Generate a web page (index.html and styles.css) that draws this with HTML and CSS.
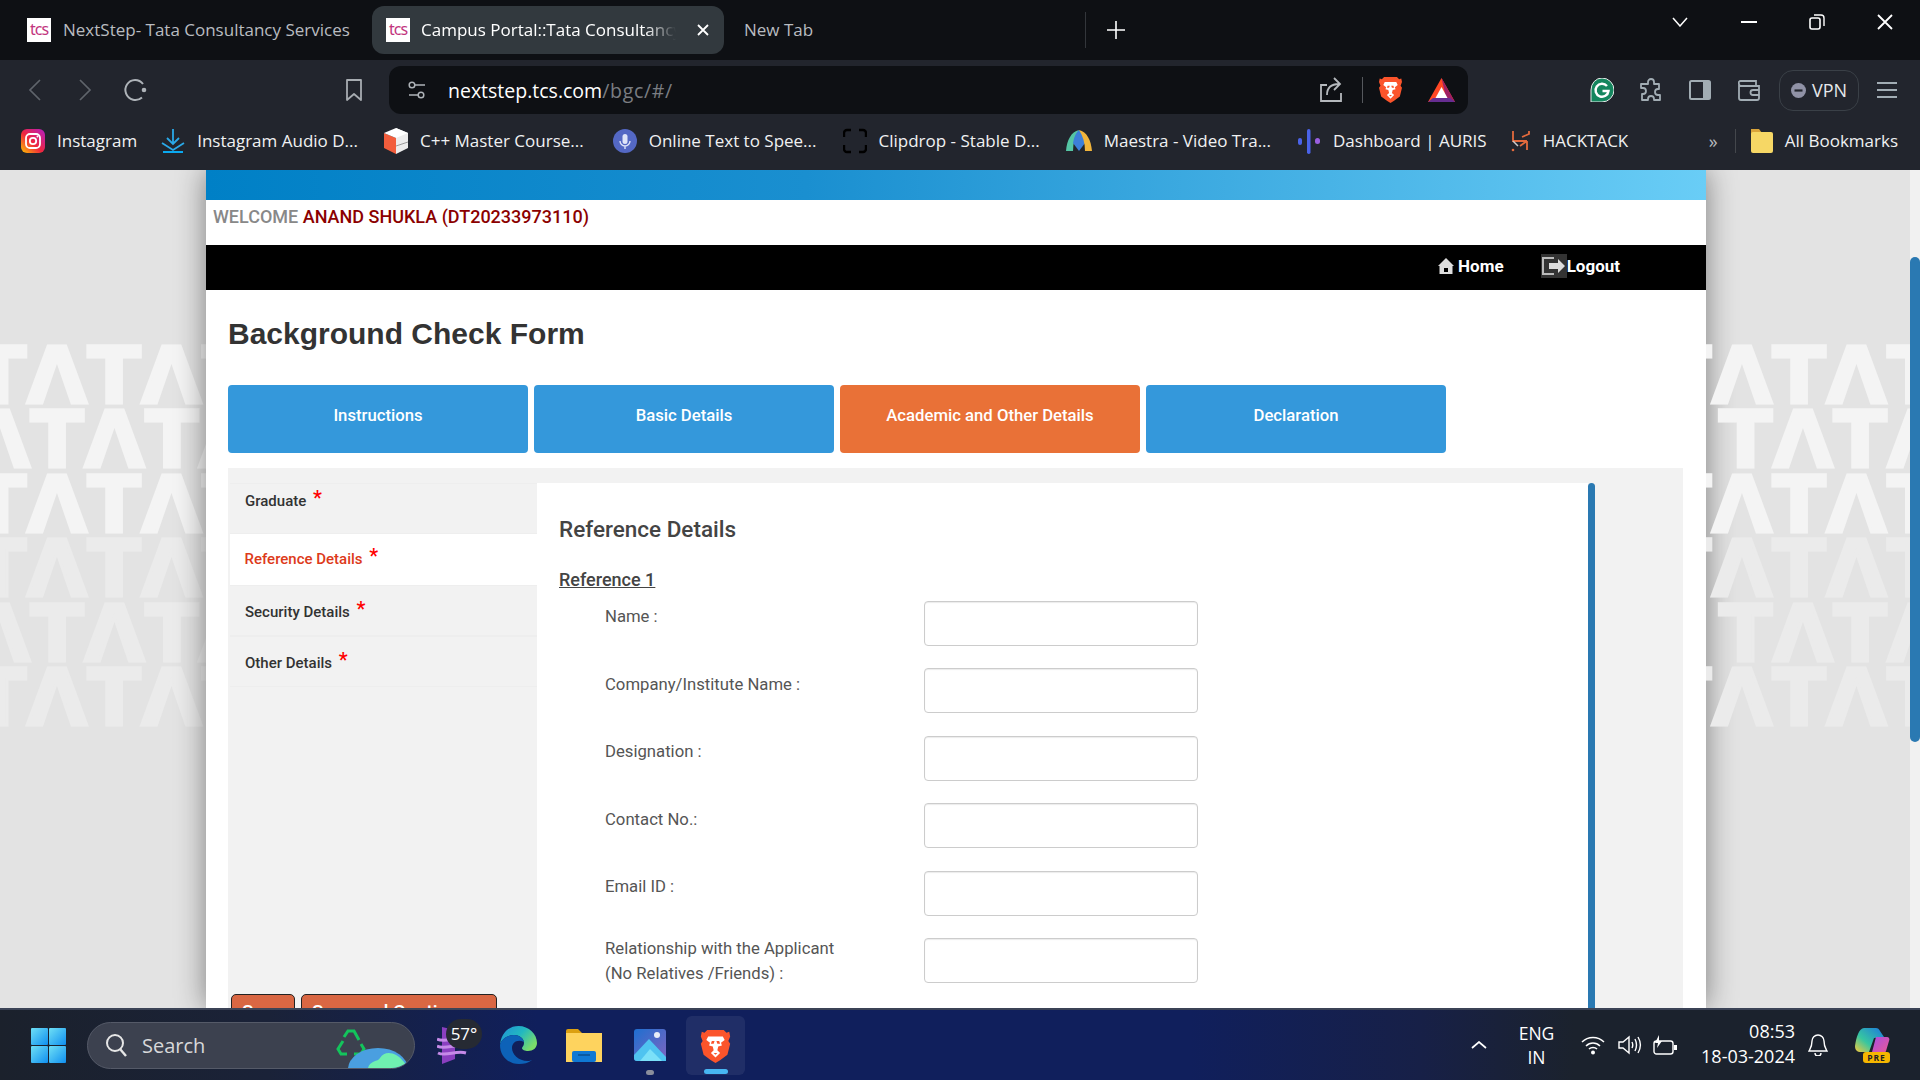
FILE: index.html
```html
<!DOCTYPE html>
<html lang="en">
<head>
  <meta charset="UTF-8">
  <title>Campus Portal::Tata Consultancy Services</title>
  <link rel="stylesheet" href="styles.css">
</head>
<body>
  <svg class="defs" width="0" height="0" aria-hidden="true">
    <symbol id="brave" viewBox="0 0 32 36">
      <path fill="#fb542b" d="M7 0h18l3 3 3-1 1 5-2 5 2 3-3 12-8 6-5 3-5-3-8-6L0 15l2-3-2-5 1-5 3 1z"/>
      <path fill="#fff" d="M8 7h16l2 4-4 3 1 3-4 1-1 4 3 3-5 5-5-5 3-3-1-4-4-1 1-3-4-3z"/>
      <path fill="#fb542b" d="M12 12h3l-1 3h-3zM17 12h3l1 3h-3zM14 25h4l-2 2z"/>
    </symbol>
  </svg>

  <!-- tabs -->
  <div class="tabstrip">
    <div class="tab">
      <span class="favicon">tcs</span>
      <span class="tab-title">NextStep- Tata Consultancy Services</span>
    </div>
    <div class="tab tab-active">
      <span class="favicon">tcs</span>
      <span class="tab-title tab-fade">Campus Portal::Tata Consultancy Services</span>
      <svg class="tab-close" width="12" height="12" viewBox="0 0 12 12"><path d="M1 1l10 10M11 1L1 11" stroke="#fff" stroke-width="1.8"/></svg>
    </div>
    <div class="tab tab-new">
      <span class="tab-title">New Tab</span>
    </div>
    <span class="tab-divider"></span>
    <svg class="tab-plus" width="18" height="18" viewBox="0 0 18 18"><path d="M9 0v18M0 9h18" stroke="#fff" stroke-width="1.6"/></svg>
    <div class="win-controls">
      <svg width="18" height="10" viewBox="0 0 18 10"><path d="M2 1l7 8 7-8" fill="none" stroke="#fff" stroke-width="1.5"/></svg>
      <svg width="16" height="10" viewBox="0 0 16 10"><path d="M0 5h16" stroke="#fff" stroke-width="2"/></svg>
      <svg width="16" height="16" viewBox="0 0 16 16"><rect x="1" y="4" width="10" height="11" rx="2" fill="none" stroke="#fff" stroke-width="1.6"/><path d="M5 1h7a3 3 0 0 1 3 3v8" fill="none" stroke="#fff" stroke-width="1.4"/></svg>
      <svg width="16" height="16" viewBox="0 0 16 16"><path d="M1 1l14 14M15 1L1 15" stroke="#fff" stroke-width="1.8"/></svg>
    </div>
  </div>

  <!-- toolbar -->
  <div class="toolbar">
    <div class="tb-btn"><svg width="14" height="24" viewBox="0 0 14 24"><path d="M12 2L2 12l10 10" fill="none" stroke="#5f646b" stroke-width="1.7"/></svg></div>
    <div class="tb-btn"><svg width="14" height="24" viewBox="0 0 14 24"><path d="M2 2l10 10L2 22" fill="none" stroke="#5f646b" stroke-width="1.7"/></svg></div>
    <div class="tb-btn"><svg width="26" height="26" viewBox="0 0 26 26"><path d="M20 20.5A10 10 0 1 1 13 3" fill="none" stroke="#aeb3b8" stroke-width="2"/><path d="M13 3a10 10 0 0 1 8 4" fill="none" stroke="#aeb3b8" stroke-width="2"/><circle cx="22" cy="13" r="2.3" fill="#aeb3b8"/></svg></div>
    <div class="tb-btn tb-bookmark"><svg width="18" height="24" viewBox="0 0 18 24"><path d="M2 2h14v20l-7-6-7 6z" fill="none" stroke="#a7acb1" stroke-width="1.8" stroke-linejoin="round"/></svg></div>
    <div class="addressbar">
      <svg class="tune" width="20" height="20" viewBox="0 0 20 20"><circle cx="5" cy="5" r="2.8" fill="none" stroke="#aeb3b8" stroke-width="1.5"/><path d="M8 5h10M2 15h9" stroke="#aeb3b8" stroke-width="1.5"/><circle cx="14" cy="15" r="2.8" fill="none" stroke="#aeb3b8" stroke-width="1.5"/></svg>
      <span class="url"><b>nextstep.tcs.com</b>/bgc/#/</span>
      <svg class="share" width="24" height="26" viewBox="0 0 24 26"><path d="M8 8H2v16h20v-8" fill="none" stroke="#b5b9bd" stroke-width="1.8"/><path d="M8 18c0-7 4-11 12-11M15 1l6 6-6 6" fill="none" stroke="#b5b9bd" stroke-width="1.8"/></svg>
      <span class="addr-sep"></span>
      <svg class="addr-brave" width="23" height="26"><use href="#brave"/></svg>
      <svg class="addr-bat" width="27" height="24" viewBox="0 0 27 24"><path fill="#ff4724" d="M13.5 0L27 24H0z"/><path fill="#9e1f63" d="M13.5 0L27 24h-8z"/><path fill="#662d91" d="M0 24l5-4h17l5 4z"/><path fill="#fff" d="M13.5 9l6 11h-12z"/></svg>
    </div>
    <div class="tb-btn tb-ext tb-first-ext">
      <svg width="24" height="24" viewBox="0 0 24 24"><path fill="#15865e" d="M12 0a12 12 0 0 1 0 24H1V12A11 12 0 0 1 12 0z" stroke="#e8e8e8"/><path d="M17 8a6.5 6.5 0 1 0 1.5 5h-6" fill="none" stroke="#fff" stroke-width="2.4"/></svg>
    </div>
    <div class="tb-btn tb-ext"><svg width="24" height="24" viewBox="0 0 24 24"><path d="M9 4a3 3 0 0 1 6 0v2h5v5h-1a3 3 0 0 0 0 6h2v5h-6v-1a3 3 0 0 0-6 0v1H3v-6h1a3 3 0 0 0 0-6H2V6h7z" fill="none" stroke="#a2adb4" stroke-width="1.8" stroke-linejoin="round"/></svg></div>
    <div class="tb-btn tb-ext"><svg width="22" height="20" viewBox="0 0 22 20"><rect x="1" y="1" width="20" height="18" rx="1.5" fill="none" stroke="#a2adb4" stroke-width="2"/><path fill="#a2adb4" d="M14 1h7v18h-7z"/></svg></div>
    <div class="tb-btn tb-ext"><svg width="22" height="22" viewBox="0 0 22 22"><path d="M1 5v14a2 2 0 0 0 2 2h16a2 2 0 0 0 2-2V7H3a2 2 0 0 1-2-2 2 2 0 0 1 2-3h15v5" fill="none" stroke="#a2adb4" stroke-width="1.8"/><path d="M21 11h-6a2.5 2.5 0 0 0 0 5h6" fill="none" stroke="#a2adb4" stroke-width="1.8"/></svg></div>
    <div class="vpn">
      <svg width="15" height="15" viewBox="0 0 15 15"><circle cx="7.5" cy="7.5" r="7.5" fill="#9092a6"/><path d="M3.5 7.5h8" stroke="#22252d" stroke-width="2.2"/></svg>
      VPN
    </div>
    <div class="tb-btn tb-ext tb-burger"><svg width="20" height="16" viewBox="0 0 20 16"><path d="M0 1h20M0 8h20M0 15h20" stroke="#a2adb4" stroke-width="1.8"/></svg></div>
  </div>

  <!-- bookmarks -->
  <div class="bookmarks">
    <div class="bm bm-tight"><svg width="24" height="24" viewBox="0 0 24 24"><defs><linearGradient id="ig" x1="0" y1="1" x2="1" y2="0"><stop offset="0" stop-color="#fdc500"/><stop offset=".45" stop-color="#f0263c"/><stop offset="1" stop-color="#b61fc4"/></linearGradient></defs><rect width="24" height="24" rx="6" fill="url(#ig)"/><rect x="5" y="5" width="14" height="14" rx="4" fill="none" stroke="#fff" stroke-width="1.8"/><circle cx="12" cy="12" r="3.2" fill="none" stroke="#fff" stroke-width="1.8"/><circle cx="16.5" cy="7.5" r="1" fill="#fff"/></svg>Instagram</div>
    <div class="bm"><svg width="24" height="24" viewBox="0 0 24 24"><path d="M12 0v14M6 9l6 6 6-6M1 14l11 7 11-7" fill="none" stroke="#2aa9e8" stroke-width="1.8"/><path d="M2 23h20" stroke="#0aa9f0" stroke-width="2"/></svg>Instagram Audio D...</div>
    <div class="bm bm-loose"><svg width="24" height="26" viewBox="0 0 24 26"><path fill="#ececec" d="M12 0l12 5v15l-12 6z"/><path fill="#f25d3c" d="M0 5l12 5v16L0 20z"/><path fill="#fff" d="M0 5l12-5 12 5-12 5z"/><path d="M12 18l12-4" stroke="#999"/></svg>C++ Master Course...</div>
    <div class="bm"><svg width="24" height="24" viewBox="0 0 24 24"><circle cx="12" cy="12" r="12" fill="#5468c4"/><rect x="9.5" y="5" width="5" height="10" rx="2.5" fill="#dfe4f8"/><path d="M7 12a5 5 0 0 0 10 0M12 17v3" fill="none" stroke="#dfe4f8" stroke-width="1.4"/></svg>Online Text to Spee...</div>
    <div class="bm"><svg width="24" height="26" viewBox="0 0 24 26"><path d="M8 2H4a3 3 0 0 0-3 3v4M16 2h4a3 3 0 0 1 3 3v4M8 24H4a3 3 0 0 1-3-3v-4M16 24h4a3 3 0 0 0 3-3v-4" fill="none" stroke="#000" stroke-width="2.4"/></svg>Clipdrop - Stable D...</div>
    <div class="bm"><svg width="26" height="22" viewBox="0 0 26 22"><path fill="#55c6a4" d="M0 21C1 10 5 2 13 0 9 6 7 13 7 21z"/><path fill="#3d7fd9" d="M13 0c4 4 5 8 6 13l-6 8-6-8c1-5 2-9 6-13z"/><path fill="#f2b53b" d="M13 0c8 2 12 10 13 21h-7c0-8-2-15-6-21z"/></svg>Maestra - Video Tra...</div>
    <div class="bm bm-tight"><svg width="24" height="26" viewBox="0 0 24 26"><rect x="1" y="10" width="4" height="7" rx="2" fill="#4a63e8"/><rect x="10" y="1" width="3.5" height="25" rx="1.7" fill="#4a63e8"/><rect x="18" y="10" width="5" height="6" rx="2.5" fill="#9a5fe0"/></svg>Dashboard | AURIS</div>
    <div class="bm"><svg width="20" height="22" viewBox="0 0 20 22"><path d="M2 1v10h14M16 11l-7 5M18 1v3l-7 3M16 11v9" fill="none" stroke="#e36a3d" stroke-width="1.8"/><path d="M2 11l5 5" stroke="#ccc" stroke-width="1.5"/><circle cx="2" cy="20" r="1.3" fill="#e36a3d"/></svg>HACKTACK</div>
    <span class="bm-more">»</span>
    <span class="bm-sep"></span>
    <div class="bm bm-folder"><svg width="23" height="26" viewBox="0 0 23 26"><path fill="#d9a43a" d="M1 1h8l3 4v3H1z"/><rect x="1" y="4" width="22" height="21" rx="2" fill="#f6d765"/></svg>All Bookmarks</div>
  </div>

  <!-- page in the browser -->
  <main class="viewport">
    <aside class="watermark watermark-left" aria-hidden="true">
      <div class="wm-row wm-a">TΛTΛTΛTΛ</div>
      <div class="wm-row wm-b">TΛTΛTΛTΛ</div>
      <div class="wm-row wm-a">TΛTΛTΛTΛ</div>
      <div class="wm-row wm-a wm-faint">TΛTΛTΛTΛ</div>
      <div class="wm-row wm-b wm-faint">TΛTΛTΛTΛ</div>
      <div class="wm-row wm-a wm-faint">TΛTΛTΛTΛ</div>
    </aside>

    <div class="sheet">
      <div class="topband"></div>
      <div class="welcome"><span class="welcome-label">WELCOME</span> <span class="welcome-name">ANAND SHUKLA (DT20233973110)</span></div>
      <nav class="blacknav">
        <a class="nav-link">
          <svg width="16" height="16" viewBox="0 0 16 16"><path fill="#ddd" d="M8 0l8 8h-1.5v8h-13V8H0z"/><rect x="6" y="10" width="4" height="4" fill="#000"/></svg>
          Home
        </a>
        <a class="nav-link nav-logout">
          <span class="logout-icon"><svg width="24" height="18" viewBox="0 0 24 18"><path d="M12 1H1v16h11" fill="none" stroke="#bbb" stroke-width="2"/><path fill="#ddd" d="M7 6h9V2l7 7-7 7v-4H7z"/></svg></span>Logout
        </a>
      </nav>

      <div class="sheet-body">
        <h1>Background Check Form</h1>
        <div class="steps">
          <div class="step">Instructions</div>
          <div class="step">Basic Details</div>
          <div class="step step-active">Academic and Other Details</div>
          <div class="step">Declaration</div>
        </div>

        <div class="panel">
          <div class="sidemenu">
            <div class="side-item">Graduate <span class="req">*</span></div>
            <div class="side-item side-active">Reference Details <span class="req">*</span></div>
            <div class="side-item">Security Details <span class="req">*</span></div>
            <div class="side-item">Other Details <span class="req">*</span></div>
            <div class="side-actions">
              <button class="btn-save">Save</button>
              <button class="btn-save btn-continue">Save and Continue</button>
            </div>
          </div>
          <div class="content">
            <h3>Reference Details</h3>
            <h4>Reference 1</h4>
            <div class="field"><label>Name :</label><input type="text"></div>
            <div class="field"><label>Company/Institute Name :</label><input type="text"></div>
            <div class="field"><label>Designation :</label><input type="text"></div>
            <div class="field"><label>Contact No.:</label><input type="text"></div>
            <div class="field"><label>Email ID :</label><input type="text"></div>
            <div class="field field-tall"><label>Relationship with the Applicant<br>(No Relatives /Friends) :</label><input type="text"></div>
          </div>
          <div class="inner-scroll"></div>
        </div>
      </div>
    </div>

    <aside class="watermark watermark-right" aria-hidden="true">
      <div class="wm-row wm-c">TΛTΛTΛTΛ</div>
      <div class="wm-row wm-d">TΛTΛTΛTΛ</div>
      <div class="wm-row wm-c">TΛTΛTΛTΛ</div>
      <div class="wm-row wm-c wm-faint">TΛTΛTΛTΛ</div>
      <div class="wm-row wm-d wm-faint">TΛTΛTΛTΛ</div>
      <div class="wm-row wm-c wm-faint">TΛTΛTΛTΛ</div>
    </aside>
    <div class="page-scroll"><div class="page-thumb"></div></div>
  </main>

  <!-- windows taskbar -->
  <footer class="taskbar">
    <svg class="win-logo" width="35" height="35" viewBox="0 0 35 35">
      <defs><linearGradient id="win" x1="0" y1="0" x2="1" y2="1"><stop offset="0" stop-color="#6fe0f5"/><stop offset="1" stop-color="#0f8ff0"/></linearGradient></defs>
      <rect width="17" height="17" rx="1" fill="url(#win)"/><rect x="18" width="17" height="17" rx="1" fill="url(#win)"/><rect y="18" width="17" height="17" rx="1" fill="url(#win)"/><rect x="18" y="18" width="17" height="17" rx="1" fill="url(#win)"/>
    </svg>
    <div class="searchbox">
      <svg width="22" height="24" viewBox="0 0 22 24"><circle cx="10" cy="10" r="8" fill="none" stroke="#e6e6e6" stroke-width="2"/><path d="M15 16l6 7" stroke="#e6e6e6" stroke-width="2.4"/></svg>
      <span>Search</span>
      <svg class="search-art" width="76" height="46" viewBox="0 0 76 46">
        <path d="M10 15l4-6h6l5 9M27 22l3 5-3 5h-7M13 32H7l-3-5 5-8" fill="none" stroke="#13c45c" stroke-width="3"/>
        <ellipse cx="44" cy="47" rx="30" ry="21" fill="#4a9fe0"/>
        <path d="M34 46c2-8 10-6 12-10 5-8 16-6 24 4l4 6z" fill="#6ff0b0"/>
      </svg>
    </div>
    <div class="task-icon task-widget">
      <svg width="30" height="37" viewBox="0 0 30 37"><path fill="#8a3fc0" d="M5 0l13 3v29L5 37z"/><path d="M0 12c8 4 20-3 30 1M0 19c8 4 20-3 30 1M1 26c8 4 18-3 28 0" fill="none" stroke="#c58ae8" stroke-width="3"/></svg>
      <span class="temp-badge">57°</span>
    </div>
    <div class="task-icon task-edge">
      <svg width="37" height="38" viewBox="0 0 37 38"><defs><linearGradient id="edge" x1="0" y1="0" x2="1" y2=".6"><stop offset="0" stop-color="#1f8fd8"/><stop offset=".55" stop-color="#22b8c0"/><stop offset="1" stop-color="#7adc6a"/></linearGradient></defs><path fill="url(#edge)" d="M18.5 0C29 0 37 8 37 17c0 5-4 8-9 8-3 0-6-1-6-3 0-1 2-2 2-5 0-5-5-8-10-8C7 9 1 14 0 19 1 8 8 0 18.5 0z"/><path fill="#0d62b8" d="M0 19c1-5 7-10 14-10 5 0 9 3 10 7-6-3-12 0-12 6 0 6 6 13 16 13 1 0 3-.5 4-1-4 3-8 4-13 4C8 38 0 30 0 19z"/></svg>
    </div>
    <div class="task-icon task-folder">
      <svg width="36" height="33" viewBox="0 0 36 33"><path fill="#dca011" d="M0 2a2 2 0 0 1 2-2h10l4 4v6H0z"/><path fill="#fed35e" d="M0 4h36v29H0z"/><rect x="6" y="22" width="24" height="11" rx="2" fill="#0f78d4"/><path d="M12 26h12" stroke="#0a4f90" stroke-width="1.5"/></svg>
    </div>
    <div class="task-icon task-photos">
      <svg width="32" height="32" viewBox="0 0 32 32"><defs><linearGradient id="ph" x1="0" y1="0" x2="1" y2="1"><stop offset="0" stop-color="#1e6fd0"/><stop offset="1" stop-color="#8064c0"/></linearGradient></defs><rect width="32" height="32" rx="3" fill="url(#ph)"/><circle cx="23" cy="6" r="3" fill="#e8eef8"/><path fill="#4fc3f0" d="M0 26l15-16 17 18v4H3a3 3 0 0 1-3-3z"/><path fill="#7be0f8" d="M6 32l10-12 12 12z"/></svg>
      <span class="run-dot"></span>
    </div>
    <div class="task-icon task-brave">
      <svg width="31" height="33"><use href="#brave"/></svg>
      <span class="run-bar"></span>
    </div>

    <div class="tray">
      <svg class="tray-chev" width="16" height="8" viewBox="0 0 16 8"><path d="M1 7l7-6 7 6" fill="none" stroke="#fff" stroke-width="1.7"/></svg>
      <div class="lang">ENG<br>IN</div>
      <svg class="tray-wifi" width="24" height="20" viewBox="0 0 24 20"><path d="M1 7c6-6 16-6 22 0M5 11c4-4 10-4 14 0M8 14c2-2 6-2 8 0" fill="none" stroke="#fff" stroke-width="1.5"/><circle cx="12" cy="17.5" r="2" fill="#fff"/></svg>
      <svg class="tray-sound" width="24" height="20" viewBox="0 0 24 20"><path d="M1 7h4l6-5v16l-6-5H1z" fill="none" stroke="#fff" stroke-width="1.4"/><path d="M14 7c1 2 1 4 0 6M17 4c2 4 2 8 0 12M20 2c3 5 3 11 0 16" fill="none" stroke="#fff" stroke-width="1.4"/></svg>
      <svg class="tray-batt" width="24" height="20" viewBox="0 0 24 20"><rect x="1" y="6" width="19" height="13" rx="2.5" fill="none" stroke="#fff" stroke-width="1.4"/><path fill="#fff" d="M21 10h3v5h-3zM6 0L2 8h3l-1 5 5-7H6z"/></svg>
      <div class="clock">08:53<br>18-03-2024</div>
      <svg class="tray-bell" width="20" height="22" viewBox="0 0 20 22"><path d="M10 1a6 6 0 0 0-6 6c0 6-2 8-3 10h18c-1-2-3-4-3-10a6 6 0 0 0-6-6zM7 19a3 3 0 0 0 6 0" fill="none" stroke="#fff" stroke-width="1.4"/></svg>
      <div class="copilot">
        <svg width="35" height="28" viewBox="0 0 35 28"><defs><linearGradient id="cp" x1="0" y1="1" x2="1" y2="0"><stop offset="0" stop-color="#f6c93b"/><stop offset=".4" stop-color="#37c6a0"/><stop offset="1" stop-color="#1b78e0"/></linearGradient><linearGradient id="cp2" x1="0" y1="0" x2="1" y2="1"><stop offset="0" stop-color="#a54ee8"/><stop offset="1" stop-color="#f25a8a"/></linearGradient></defs><path fill="url(#cp)" d="M9 0h12c2 0 3 1 4 3l4 6-10 1-5 14H6C2 24 0 22 0 18 1 10 4 0 9 0z"/><path fill="url(#cp2)" d="M21 9h11c2 0 3 2 2 4l-3 10c-1 3-3 5-6 5h-9z"/></svg>
        <span class="pre-tag">PRE</span>
      </div>
    </div>
  </footer>
</body>
</html>
```

FILE: styles.css
```css
* {
  box-sizing: border-box;
}
html, body {
  height: 100%;
}
body {
  margin: 0;
  display: flex;
  flex-direction: column;
  overflow: hidden;
  font-family: Roboto, "Liberation Sans", sans-serif;
  background: #e3e3e3;
}
.defs {
  position: absolute;
}

/* tab strip */
.tabstrip {
  flex: none;
  height: 60px;
  display: flex;
  align-items: center;
  padding-left: 15px;
  gap: 5px;
  background: #0e1014;
  font-family: "Open Sans", sans-serif;
  font-size: 17px;
  color: #b9bcc0;
}
.tab {
  width: 352px;
  height: 48px;
  padding-left: 12px;
  display: flex;
  align-items: center;
  gap: 12px;
  border-radius: 12px;
}
.tab-active {
  background: #32393e;
  padding-left: 14px;
  color: #fff;
  gap: 11px;
}
.tab-new {
  margin-left: 1px;
  padding-left: 14px;
}
.favicon {
  width: 24px;
  height: 24px;
  flex: none;
  background: #fff;
  color: #c2347e;
  font-size: 16px;
  line-height: 23px;
  font-family: "Noto Sans", sans-serif;
  letter-spacing: -1px;
  text-align: center;
}
.tab-title {
  white-space: nowrap;
  overflow: hidden;
  margin-top: -2px;
}
.tab-fade {
  width: 255px;
  flex: none;
  -webkit-mask-image: linear-gradient(90deg, #000 88%, transparent);
  mask-image: linear-gradient(90deg, #000 88%, transparent);
}
.tab-close {
  margin-left: 10px;
}
.tab-divider {
  width: 1px;
  height: 36px;
  background: #33363b;
  margin-left: -2px;
}
.tab-plus {
  margin-left: 16px;
}
.win-controls {
  margin-left: auto;
  margin-right: 27px;
  margin-top: -16px;
  display: flex;
  align-items: center;
  gap: 52px;
}

/* toolbar */
.toolbar {
  flex: none;
  height: 60px;
  padding: 6px 0 6px 10px;
  display: flex;
  align-items: center;
  background: #22252d;
}
.tb-btn {
  width: 50px;
  height: 48px;
  flex: none;
  display: flex;
  align-items: center;
  justify-content: center;
}
.tb-ext {
  width: 49px;
}
.tb-bookmark {
  margin-left: 169px;
}
.addressbar {
  width: 1079px;
  height: 48px;
  margin-left: 10px;
  padding: 0 13px 0 18px;
  display: flex;
  align-items: center;
  background: #0e1014;
  border-radius: 12px;
}
.url {
  margin-left: 21px;
  font-family: "Open Sans", sans-serif;
  font-size: 19.5px;
  letter-spacing: 0.7px;
  color: #7a7d82;
}
.url b {
  font-weight: 400;
  letter-spacing: 0;
  color: #fff;
}
.share {
  margin-left: auto;
}
.addr-sep {
  width: 1px;
  height: 26px;
  margin: 0 16px 0 19px;
  background: #55585d;
}
.addr-bat {
  margin-left: 26px;
}
.tb-first-ext {
  margin-left: 109px;
}
.vpn {
  width: 80px;
  height: 41px;
  margin-left: 6px;
  display: flex;
  align-items: center;
  justify-content: center;
  gap: 6px;
  border: 1.5px solid #3a4047;
  border-radius: 14px;
  font-family: "Open Sans", sans-serif;
  font-size: 18px;
  color: #e6e8ea;
}
.tb-burger {
  margin-left: 3px;
}

/* bookmarks bar */
.bookmarks {
  flex: none;
  height: 50px;
  padding: 0 0 9px 21px;
  display: flex;
  align-items: center;
  gap: 26px;
  background: #22252d;
  font-family: "Open Sans", sans-serif;
  font-size: 17px;
  color: #f0f1f2;
  white-space: nowrap;
}
.bm {
  display: flex;
  align-items: center;
  gap: 12px;
}
.bm-tight {
  margin-right: -2px;
}
.bm-loose {
  margin-right: 3px;
}
.bm-more {
  margin-left: auto;
  color: #b5b8bc;
  font-size: 18px;
}
.bm-sep {
  width: 1px;
  height: 24px;
  background: #44474c;
  margin-left: -9px;
}
.bm-folder {
  margin-left: -12px;
  margin-right: 22px;
}

/* viewport */
.viewport {
  flex: 1;
  min-height: 0;
  display: flex;
  overflow: hidden;
  background: #e3e3e3;
}
.watermark {
  width: 206px;
  flex: none;
  padding-top: 174px;
  overflow: hidden;
  font-family: "DejaVu Sans", sans-serif;
  font-weight: 700;
  font-size: 78px;
  font-kerning: none;
  letter-spacing: 0.5px;
  line-height: 64.4px;
  color: #f4f4f4;
  -webkit-text-stroke: 3px #f4f4f4;
  white-space: nowrap;
  filter: blur(0.5px);
}
.watermark-right {
  width: 204px;
}
.wm-faint {
  color: #ebebeb;
  -webkit-text-stroke-color: #ebebeb;
}
.wm-a { margin-left: -27px; }
.wm-b { margin-left: -84px; }
.wm-c { margin-left: -48px; }
.wm-d { margin-left: 13px; }
.sheet {
  flex: none;
  width: 1500px;
  position: relative;
  background: #fff;
  box-shadow: 0 0 28px rgba(0, 0, 0, 0.45);
  overflow: hidden;
  clip-path: inset(0 -40px);
}
.topband {
  height: 30px;
  background: linear-gradient(90deg, #0080c6 0%, #1a8fd0 40%, #69cdf6 100%);
}
.welcome {
  height: 45px;
  padding: 4px 0 0 7px;
  font-size: 18px;
  font-weight: 500;
  line-height: 26px;
}
.welcome-label {
  color: #888;
}
.welcome-name {
  color: #8b0000;
}
.blacknav {
  height: 45px;
  padding: 0 86px 3px 0;
  display: flex;
  align-items: center;
  justify-content: flex-end;
  gap: 37px;
  background: #000;
  color: #fff;
  font-size: 17px;
  font-weight: 700;
}
.nav-link {
  display: flex;
  align-items: center;
  gap: 4px;
}
.nav-logout {
  gap: 0;
}
.logout-icon {
  width: 26px;
  height: 24px;
  display: flex;
  align-items: center;
  justify-content: center;
  background: #333;
}

.sheet-body {
  padding: 0 23px 0 22px;
}
h1 {
  height: 95px;
  margin: 0;
  padding-top: 25px;
  font-size: 30px;
  font-weight: 700;
  line-height: 38px;
  color: #333;
  font-family: "Liberation Sans", sans-serif;
}
.steps {
  display: flex;
  gap: 6px;
  margin-bottom: 15px;
}
.step {
  width: 300px;
  height: 68px;
  padding-bottom: 7px;
  display: flex;
  align-items: center;
  justify-content: center;
  background: #3498db;
  border-radius: 4px;
  color: #fff;
  font-size: 16.7px;
  font-weight: 500;
}
.step-active {
  background: #e97137;
}

.panel {
  height: 600px;
  padding: 15px 0 0 2px;
  display: flex;
  align-items: stretch;
  background: #f2f2f2;
}
.sidemenu {
  width: 307px;
  flex: none;
  display: flex;
  flex-direction: column;
}
.side-item {
  height: 51px;
  padding: 15.5px 0 0 15px;
  border-top: 1px solid #eee;
  border-bottom: 1px solid #eee;
  color: #333;
  font-size: 15px;
  font-weight: 500;
  line-height: 20px;
}
.side-item:first-child {
  padding-top: 7px;
}
.side-active {
  background: #fff;
  border-color: #fff;
  color: #dd3a1a;
  padding-top: 14px;
  padding-left: 14.5px;
}
.req {
  position: relative;
  top: -1px;
  margin-left: 3px;
  color: #f00;
  font-size: 20px;
  line-height: 16px;
}
.side-actions {
  margin-top: 307px;
  display: flex;
  gap: 6px;
  padding-left: 1px;
}
.btn-save {
  width: 64px;
  height: 40px;
  padding: 0 0 4px 10px;
  border: 1px solid #222;
  border-radius: 5px;
  background: #d96743;
  color: #fff;
  font-family: inherit;
  font-size: 18.8px;
  font-weight: 500;
  text-align: left;
  white-space: nowrap;
}
.btn-continue {
  width: 196px;
}
.content {
  width: 1051px;
  flex: none;
  padding: 0 0 0 22px;
  background: #fff;
  color: #555;
}
h3 {
  margin: 0;
  padding-top: 32px;
  font-size: 22.5px;
  font-weight: 500;
  line-height: 28px;
  color: #444;
}
h4 {
  margin: 0;
  padding-top: 25px;
  font-size: 18px;
  font-weight: 500;
  line-height: 24px;
  text-decoration: underline;
  color: #444;
}
.field {
  height: 67.5px;
  display: flex;
  align-items: flex-start;
}
.content h4 + .field {
  margin-top: 8.5px;
}
.field label {
  width: 365px;
  flex: none;
  padding-left: 46px;
  padding-top: 4.5px;
  font-size: 16.7px;
  line-height: 24.5px;
}
.field-tall label {
  padding-top: 0;
  margin-top: -1px;
}
.field input {
  width: 274px;
  height: 45px;
  border: 1.5px solid #ccc;
  border-radius: 4px;
  background: #fff;
  box-shadow: inset 0 1px 1px rgba(0, 0, 0, 0.08);
}
.inner-scroll {
  width: 7px;
  flex: none;
  background: #2a79b2;
  border-radius: 4px 4px 0 0;
}

.page-scroll {
  width: 10px;
  flex: none;
  padding-top: 87px;
  background: #f1f1f1;
}
.page-thumb {
  height: 485px;
  background: #2a79b2;
  border-radius: 5px;
}

/* taskbar */
.taskbar {
  flex: none;
  height: 72px;
  display: flex;
  align-items: center;
  border-top: 2px solid #3b4356;
  background: linear-gradient(90deg, #1b212c 0%, #1a2238 14%, #101f5c 28%, #101f5c 62%, #172047 74%, #1b222d 82%, #1b222d 100%);
  font-family: "Open Sans", sans-serif;
  color: #fff;
}
.win-logo {
  margin-left: 31px;
  flex: none;
}
.searchbox {
  width: 328px;
  height: 47px;
  margin-left: 21px;
  padding-left: 17px;
  display: flex;
  align-items: center;
  gap: 15px;
  border: 1px solid #555a68;
  border-radius: 24px;
  background: #3c414f;
  color: #d8d8da;
  font-size: 20px;
  overflow: hidden;
}
.search-art {
  margin-left: auto;
  margin-right: 4px;
  align-self: flex-end;
}
.task-icon {
  flex: none;
  position: relative;
  display: flex;
  justify-content: center;
}
.task-widget {
  margin-left: 22px;
}
.temp-badge {
  position: absolute;
  left: 9px;
  top: -8px;
  width: 36px;
  height: 30px;
  border-radius: 15px;
  background: #262a33;
  font-size: 17px;
  line-height: 30px;
  text-align: center;
}
.task-edge {
  margin-left: 33px;
}
.task-folder {
  margin-left: 29px;
}
.task-photos {
  margin-left: 32px;
}
.run-dot {
  position: absolute;
  left: 12px;
  bottom: -14px;
  width: 8px;
  height: 5px;
  border-radius: 3px;
  background: #8a8e9c;
}
.task-brave {
  width: 59px;
  height: 59px;
  margin-left: 20px;
  padding-top: 14px;
  background: rgba(255, 255, 255, 0.07);
  border-radius: 6px;
}
.run-bar {
  position: absolute;
  left: 18px;
  bottom: 1px;
  width: 24px;
  height: 5px;
  border-radius: 3px;
  background: #47b6f2;
}
.tray {
  margin-left: auto;
  margin-right: 29px;
  display: flex;
  align-items: center;
}
.lang {
  width: 50px;
  margin-left: 24.5px;
  font-size: 17.5px;
  line-height: 24px;
  text-align: center;
}
.tray-wifi {
  margin-left: 19.5px;
}
.tray-sound {
  margin-left: 13px;
}
.tray-batt {
  margin-left: 11px;
}
.clock {
  width: 118px;
  margin-top: -3px;
  font-size: 18px;
  line-height: 25px;
  text-align: right;
}
.tray-bell {
  margin-left: 13px;
}
.copilot {
  position: relative;
  width: 36px;
  height: 35px;
  margin-left: 27px;
}
.pre-tag {
  position: absolute;
  left: 8px;
  bottom: 0;
  width: 27px;
  height: 11px;
  border-radius: 3px;
  background: #f6b700;
  color: #222;
  font-size: 8.5px;
  font-weight: 700;
  letter-spacing: 1px;
  line-height: 11px;
  text-align: center;
}
```
